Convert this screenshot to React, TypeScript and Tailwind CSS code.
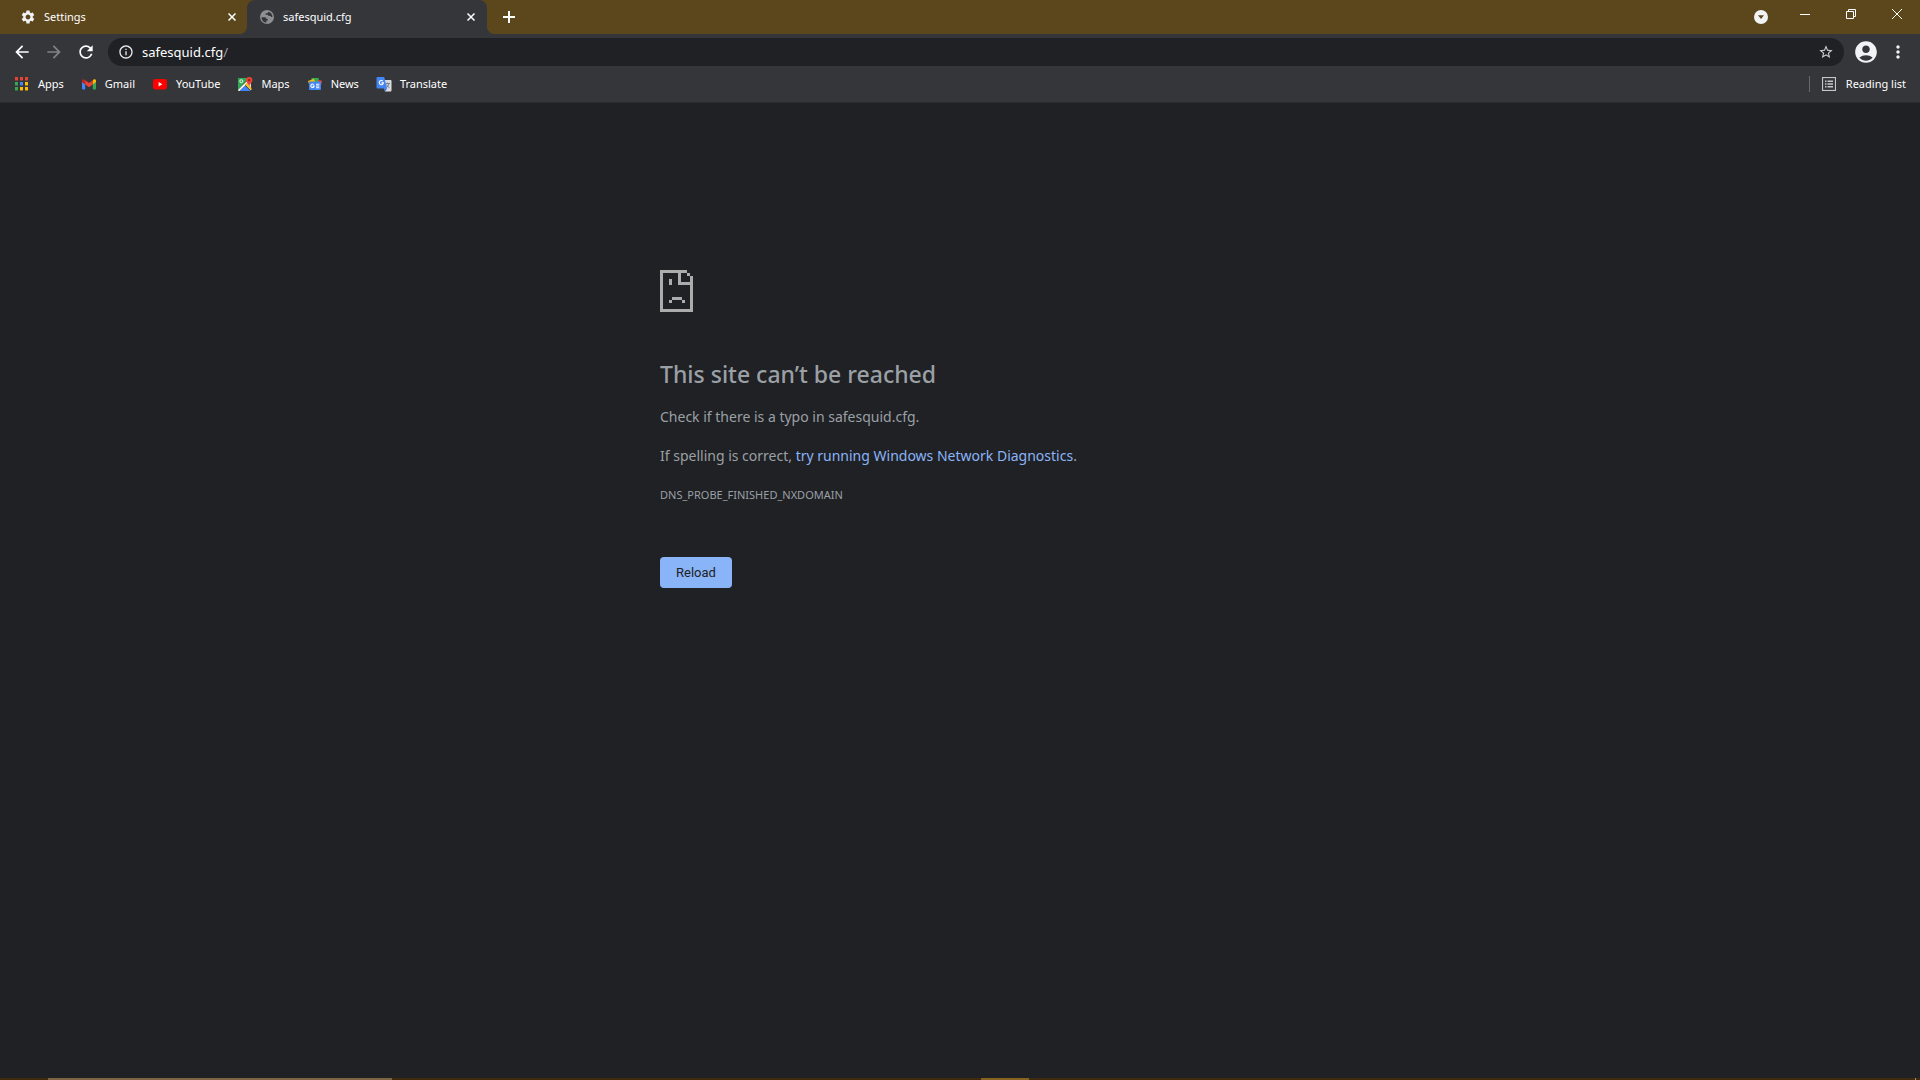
import type { ReactNode } from "react";
import {
  MdAccountCircle,
  MdArrowBack,
  MdArrowForward,
  MdInfoOutline,
  MdMoreVert,
  MdRefresh,
  MdSettings,
  MdStarBorder,
} from "react-icons/md";

function CloseGlyph() {
  return (
    <svg width="8" height="8" viewBox="0 0 8 8" stroke="currentColor" strokeWidth="1.5" aria-hidden="true">
      <path d="M0.5 0.5L7.5 7.5M7.5 0.5L0.5 7.5" />
    </svg>
  );
}

function GlobeIcon() {
  return (
    <svg width="16" height="16" viewBox="0 0 16 16" aria-hidden="true">
      <circle cx="8" cy="8" r="7" fill="#8e8f91" />
      <path
        fill="#35363a"
        d="M2.500 8.300h3.200c1.300 0 1.800.8 1.800 1.700h1.300v1.600H7.400v2.200c-2.700-.3-4.900-2.600-4.900-5.500zM9.300 2.700c0 .9-.6 1.500-1.500 1.500H6.600v1.500h1.800c.7 0 1 .5 1 1.200h1.500c.8 0 1.200.5 1.200 1.200h1.400a5.600 5.600 0 0 0-4.200-5.400z"
      />
    </svg>
  );
}

function AppsIcon() {
  const colors = ["#ea4335", "#ea4335", "#ea4335", "#34a853", "#4285f4", "#fbbc04", "#34a853", "#fbbc04", "#fbbc04"];
  return (
    <svg width="16" height="16" viewBox="0 0 16 16" aria-hidden="true">
      {colors.map((c, i) => (
        <g key={i}>
          <rect x={1 + (i % 3) * 5} y={1 + Math.floor(i / 3) * 5} width="3" height="3" fill={c} />
          <rect x={1 + (i % 3) * 5} y={4 + Math.floor(i / 3) * 5} width="3" height="1" fill={c} opacity="0.45" />
        </g>
      ))}
    </svg>
  );
}

function GmailIcon() {
  return (
    <svg width="16" height="16" viewBox="0 0 16 16" aria-hidden="true">
      <path fill="#4285f4" d="M1 5.500L4.200 8v5.500H2a1 1 0 0 1-1-1z" />
      <path fill="#34a853" d="M11.800 8L15 5.500v7a1 1 0 0 1-1 1h-2.200z" />
      <path fill="#fbbc04" d="M11.800 4.200l.9-.7c1-.7 2.300 0 2.300 1.100V6l-3.200 2.400z" />
      <path fill="#c5221f" d="M1 4.600c0-1.100 1.300-1.800 2.300-1.100l.9.700v4.200L1 6z" />
      <path fill="#ea4335" d="M4.200 4.200L8 7l3.800-2.800v4.200L8 11.200 4.200 8.400z" />
    </svg>
  );
}

function YouTubeIcon() {
  return (
    <svg width="16" height="16" viewBox="0 0 16 16" aria-hidden="true">
      <rect x="1" y="3" width="14" height="10.500" rx="2.400" fill="#f00" />
      <path fill="#fff" d="M6.600 6v4.400l3.700-2.200z" />
    </svg>
  );
}

function MapsIcon() {
  return (
    <svg width="16" height="16" viewBox="0 0 16 16" aria-hidden="true">
      <path fill="#34a853" d="M1 3a1 1 0 0 1 1-1h10L1 14z" />
      <path fill="#dadce0" d="M14 5v9.500L8 8.500z" />
      <path fill="#4285f4" d="M2.500 15L8 9.500 13.500 15z" />
      <path fill="#fff" d="M1 14L11 4l1.200 1.200L2.400 15H1.500z" />
      <path fill="#fbbc04" d="M8 8.500l1.500-1.400L14.500 12v2.300z" />
      <circle cx="4.300" cy="5.200" r="1.500" fill="none" stroke="#fff" strokeWidth="0.900" />
      <path fill="#ea4335" d="M12.200 1a3.200 3.200 0 0 1 3.200 3.200c0 2.300-2.300 3-3.200 6-.9-3-3.200-3.700-3.200-6A3.200 3.200 0 0 1 12.200 1z" />
      <circle cx="12.200" cy="4.200" r="1.100" fill="#8c1a13" />
    </svg>
  );
}

function NewsIcon() {
  return (
    <svg width="16" height="16" viewBox="0 0 16 16" aria-hidden="true">
      <path fill="#34a853" d="M4.500 2h7.300v4H4.500z" />
      <path fill="#ea4335" d="M11 3.900l4 .9-1.300 6-3-1z" />
      <path fill="#fbbc04" d="M1 5l6-2.200 1 3L2.500 10z" />
      <rect x="2" y="5.500" width="12" height="8.500" rx="0.800" fill="#4285f4" />
      <path fill="none" stroke="#fff" strokeWidth="1.100" d="M6.800 8.600a1.700 1.700 0 1 0 .4 1.500H5.700M9 8.300h3.300M9 10h3.300M9 11.700h3.300" />
    </svg>
  );
}

function TranslateIcon() {
  return (
    <svg width="16" height="16" viewBox="0 0 16 16" aria-hidden="true">
      <path fill="#dadce0" d="M6 4h8.500a1 1 0 0 1 1 1v9.500a1 1 0 0 1-1 1H9z" />
      <path fill="none" stroke="#6f7780" strokeWidth="0.900" d="M9.500 7.500H14M11.800 6.500v1M13 7.500c-.4 2-1.400 3.200-2.800 4.300M10.500 8.500c.6 1.500 1.600 2.500 3 3.300" />
      <path fill="#4285f4" d="M1.500 1h6.700l2.900 11.500H1.500a1 1 0 0 1-1-1V2a1 1 0 0 1 1-1z" />
      <path fill="#3367d6" d="M8 12.500h3.100L9 15.500z" />
      <path fill="none" stroke="#fff" strokeWidth="1.100" d="M6.900 5.200a2.100 2.100 0 1 0 .5 1.700H5.400" />
    </svg>
  );
}

function ReadingListIcon() {
  return (
    <svg width="14" height="14" viewBox="0 0 14 14" fill="none" stroke="#c4c7c9" aria-hidden="true">
      <rect x="0.500" y="0.500" width="13" height="13" strokeWidth="1.200" />
      <path strokeWidth="1.500" d="M3 4.200h1.500M3 7h1.500M3 9.800h1.500M5.500 4.200H11M5.500 7H11M5.500 9.800H11" />
    </svg>
  );
}

function SadPageIcon() {
  return (
    <svg width="33" height="42" viewBox="0 0 33 42" fill="#acacac" shapeRendering="crispEdges" aria-hidden="true">
      <path d="M0 0h27v3H3v36h27V6h3v36H0z" />
      <path d="M18 3h3v9h9v3H18zM27 3h3v3h-3z" />
      <path d="M9 9h3v6H9zM12 27h10v3H12zM9 30h3v3H9zM22 30h3v3h-3z" />
    </svg>
  );
}

function Tab({ icon, title, active }: { icon: ReactNode; title: string; active?: boolean }) {
  return (
    <div
      className={
        active
          ? "relative flex w-60 items-center rounded-t-lg bg-[#35363a] pr-2 pl-3"
          : "flex w-[247px] items-center pr-[7px] pl-5"
      }
    >
      {active && (
        <>
          <span className="absolute bottom-0 -left-2 size-2 bg-[radial-gradient(circle_at_top_left,transparent_8px,#35363a_8px)]" />
          <span className="absolute -right-2 bottom-0 size-2 bg-[radial-gradient(circle_at_top_right,transparent_8px,#35363a_8px)]" />
        </>
      )}
      <button type="button" role="tab" aria-selected={!!active} className="flex flex-1 items-center gap-2 text-left">
        {icon}
        {title}
      </button>
      <button type="button" aria-label={`Close ${title}`} className="flex size-4 items-center justify-center">
        <CloseGlyph />
      </button>
    </div>
  );
}

const bookmarks = [
  { name: "Apps", icon: <AppsIcon /> },
  { name: "Gmail", icon: <GmailIcon /> },
  { name: "YouTube", icon: <YouTubeIcon /> },
  { name: "Maps", icon: <MapsIcon /> },
  { name: "News", icon: <NewsIcon /> },
  { name: "Translate", icon: <TranslateIcon /> },
];

export default function App() {
  return (
    <div className="flex h-screen flex-col bg-[#202124] font-['Noto_Sans',sans-serif] text-[11px] leading-4 text-white">
      <header className="flex h-[34px] bg-[#5c471d]">
        <div role="tablist" className="flex">
          <Tab title="Settings" icon={<MdSettings className="size-4 text-[#f1f3f4]" />} />
          <Tab title="safesquid.cfg" active icon={<GlobeIcon />} />
        </div>
        <button type="button" aria-label="New tab" className="ml-2 flex w-7 items-center justify-center">
          <svg width="12" height="12" viewBox="0 0 12 12" stroke="currentColor" strokeWidth="2" aria-hidden="true">
            <path d="M6 0v12M0 6h12" />
          </svg>
        </button>
        <div className="ml-auto flex">
          <button type="button" aria-label="Search tabs" className="flex w-7 items-center justify-center">
            <svg width="14" height="14" viewBox="0 0 14 14" aria-hidden="true">
              <circle cx="7" cy="7" r="7" fill="#f1f3f4" />
              <path d="M4 5.300h6L7 9z" fill="#5c471d" />
            </svg>
          </button>
          <div className="ml-[7px] flex h-7">
            <button type="button" aria-label="Minimize" className="flex w-[46px] items-center justify-center">
              <span className="h-px w-2.5 bg-white" />
            </button>
            <button type="button" aria-label="Restore" className="flex w-[46px] items-center justify-center">
              <svg width="10" height="10" viewBox="0 0 10 10" fill="none" stroke="currentColor" aria-hidden="true">
                <path d="M0.500 2.500h7v7h-7zM2.500 2.500v-2h7v7h-2" />
              </svg>
            </button>
            <button type="button" aria-label="Close" className="flex w-[46px] items-center justify-center">
              <svg width="10" height="10" viewBox="0 0 10 10" stroke="currentColor" aria-hidden="true">
                <path d="M0 0l10 10M10 0L0 10" />
              </svg>
            </button>
          </div>
        </div>
      </header>

      <div className="flex h-9 items-center bg-[#35363a] pr-3 pl-3">
        <div className="flex items-center gap-3">
          <button type="button" aria-label="Back">
            <MdArrowBack className="size-5" />
          </button>
          <button type="button" aria-label="Forward">
            <MdArrowForward className="size-5 text-[#828386]" />
          </button>
          <button type="button" aria-label="Reload page">
            <MdRefresh className="size-5" />
          </button>
        </div>
        <div className="ml-3 flex h-7 flex-1 items-center rounded-full bg-[#202124] pr-2.5 pl-2.5 text-[13px]">
          <button type="button" aria-label="Site information">
            <MdInfoOutline className="size-4 text-[#e8eaed]" />
          </button>
          <input
            aria-label="Address"
            defaultValue="safesquid.cfg"
            className="ml-2 [field-sizing:content] bg-transparent outline-none"
          />
          <span className="text-[#9aa0a6]">/</span>
          <button type="button" aria-label="Bookmark this tab" className="ml-auto">
            <MdStarBorder className="size-4 text-[#d0d2d5]" />
          </button>
        </div>
        <button type="button" aria-label="Profile" className="ml-[9px]">
          <MdAccountCircle className="size-[26px] text-[#f1f3f4]" />
        </button>
        <button type="button" aria-label="Menu" className="ml-[9px]">
          <MdMoreVert className="size-5 text-[#f1f3f4]" />
        </button>
      </div>

      <nav aria-label="Bookmarks" className="flex h-[33px] items-center border-b border-[#2b2c2f] bg-[#35363a] pr-3.5 pb-1 pl-3.5">
        <div className="flex gap-[17px]">
          {bookmarks.map((b) => (
            <a key={b.name} href="#" className="flex items-center gap-2">
              {b.icon}
              {b.name}
            </a>
          ))}
        </div>
        <div className="ml-auto h-4 w-px bg-[#66686b]" />
        <button type="button" className="ml-3 flex items-center gap-2.5">
          <ReadingListIcon />
          Reading list
        </button>
      </nav>

      <main className="mx-auto w-full max-w-[600px] flex-1 pt-[167px] text-sm leading-6 text-[#9aa0a6]">
        <SadPageIcon />
        <h1 className="mt-12 text-[23px] leading-7 font-medium">This site can’t be reached</h1>
        <p className="mt-[17px]">Check if there is a typo in safesquid.cfg.</p>
        <p className="mt-[15px]">
          If spelling is correct,{" "}
          <a href="#" className="text-[#8ab4f8]">
            try running Windows Network Diagnostics
          </a>
          .
        </p>
        <p className="mt-[15px] text-[11px]">DNS_PROBE_FINISHED_NXDOMAIN</p>
        <button
          type="button"
          className="mt-[50px] block rounded bg-[#8ab4f8] px-4 py-2 font-['Roboto',sans-serif] text-[13px] leading-[15px] text-[#202124]"
        >
          Reload
        </button>
      </main>

      <footer className="flex h-0.5 bg-[#402a0e]">
        <div className="ml-12 w-[344px] bg-[#7d6443]" />
        <div className="ml-[589px] w-12 bg-[#86641f]" />
        <div className="mr-1 ml-auto w-px bg-[#9c8f7c]" />
      </footer>
    </div>
  );
}
